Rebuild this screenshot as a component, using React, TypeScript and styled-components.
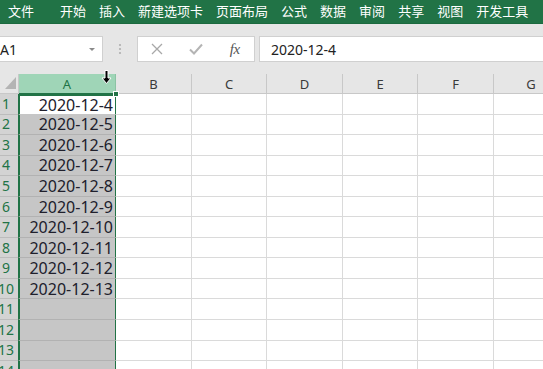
import React from "react";
import styled, { createGlobalStyle, css } from "styled-components";

const Global = createGlobalStyle`
  html, body { margin: 0; padding: 0; background: #ffffff; overflow: hidden; }
  * { box-sizing: border-box; }
`;

const GREEN = "#217346";

const Window = styled.div`
  width: 543px;
  height: 369px;
  overflow: hidden;
  position: relative;
  font-family: "Noto Sans", "Noto Sans CJK SC", sans-serif;
  background: #ffffff;
`;

const Ribbon = styled.div`
  height: 24px;
  background: ${GREEN};
  display: flex;
  align-items: flex-start;
  gap: 13px;
  padding: 1px 0 0 8px;
  border-bottom: 1px solid #1c6a3f;
`;

const Tab = styled.span<{ $wide?: boolean }>`
  font-family: "Noto Sans CJK SC", sans-serif;
  font-size: 13px;
  line-height: 19px;
  color: #ffffff;
  white-space: nowrap;
  margin-right: ${(p) => (p.$wide ? "13px" : "0")};
`;

const FormulaBar = styled.div`
  height: 50px;
  background: #e6e6e6;
  display: flex;
  align-items: flex-start;
  padding-top: 12px;
`;

const NameBox = styled.div`
  margin-left: -7px;
  width: 110px;
  height: 26px;
  background: #ffffff;
  border: 1px solid #d0d0d0;
  display: flex;
  align-items: center;
  justify-content: space-between;
  padding: 0 7px 0 6px;
  font-size: 14px;
  color: #222222;
`;

const Caret = styled.span`
  width: 0;
  height: 0;
  border-left: 3px solid transparent;
  border-right: 3px solid transparent;
  border-top: 3px solid #8a8a8a;
`;

const Grip = styled.div`
  width: 34px;
  height: 26px;
  display: flex;
  align-items: center;
  justify-content: center;
`;

const FxBox = styled.div`
  width: 118px;
  height: 26px;
  background: #ffffff;
  border: 1px solid #d0d0d0;
  display: flex;
  align-items: center;
`;

const FxButton = styled.span`
  flex: 1;
  display: flex;
  align-items: center;
  justify-content: center;
  color: #a8a8a8;
`;

const FxLabel = styled.span`
  font-family: "Liberation Serif", serif;
  font-style: italic;
  font-size: 15px;
  color: #555555;
  letter-spacing: -0.5px;
`;

const Input = styled.div`
  flex: 1;
  margin-left: 4px;
  height: 26px;
  background: #ffffff;
  border: 1px solid #d0d0d0;
  border-right: none;
  display: flex;
  align-items: center;
  padding-left: 11px;
  font-size: 14px;
  color: #222222;
`;

const Sheet = styled.div`
  margin-left: -7px;
  display: grid;
  grid-template-columns: 26px 97px 76px 75px 76px 75px 76px 75px;
  grid-template-rows: 20px;
  grid-auto-rows: 20.55px;
`;

const Corner = styled.div`
  background: #e6e6e6;
  border-right: 1px solid #c8c8c8;
  border-bottom: 1px solid #c8c8c8;
  display: flex;
  align-items: flex-end;
  justify-content: flex-end;
  padding: 0 2px 4px 0;
`;

const Triangle = styled.span`
  width: 11px;
  height: 12px;
  background: #b4b4b4;
  clip-path: polygon(100% 0, 100% 100%, 0 100%);
`;

const ColHead = styled.div<{ $active?: boolean }>`
  background: ${(p) => (p.$active ? "#9fd5b7" : "#e6e6e6")};
  color: ${(p) => (p.$active ? GREEN : "#3a3a3a")};
  border-right: 1px solid ${(p) => (p.$active ? "#8cc3a4" : "#c8c8c8")};
  border-bottom: 1px solid ${(p) => (p.$active ? GREEN : "#c8c8c8")};
  font-size: 13px;
  display: flex;
  align-items: center;
  justify-content: center;
  padding-top: 1px;
`;

const RowHead = styled.div`
  background: #d3d3d3;
  color: ${GREEN};
  border-bottom: 1px solid #bcbcbc;
  font-size: 14px;
  line-height: 1;
  display: flex;
  align-items: center;
  justify-content: center;
`;

const Cell = styled.div<{ $sel?: boolean; $active?: boolean; $first?: boolean }>`
  border-right: 1px solid #dadada;
  border-bottom: 1px solid #dadada;
  background: #ffffff;
  ${(p) =>
    p.$sel &&
    css`
      background: ${p.$active ? "#ffffff" : "#c6c6c6"};
      border-left: 2px solid ${GREEN};
      border-right: 2px solid ${GREEN};
      border-bottom: 1px solid ${p.$active ? "#c6c6c6" : "#b2b2b2"};
      ${p.$first && css`border-top: 2px solid ${GREEN};`}
      display: flex;
      align-items: center;
      justify-content: flex-end;
      padding-right: 2px;
      font-size: 16px;
      line-height: 1;
      color: #20202c;
      margin-left: -1px;
      margin-right: -1px;
    `}
`;

const FillHandle = styled.span`
  position: absolute;
  left: 113px;
  top: 91px;
  width: 6px;
  height: 6px;
  background: ${GREEN};
  border: 1px solid #ffffff;
`;

const Cursor = styled.svg`
  position: absolute;
  left: 101px;
  top: 70px;
`;

const tabs = ["文件", "开始", "插入", "新建选项卡", "页面布局", "公式", "数据", "审阅", "共享", "视图", "开发工具"];
const cols = ["A", "B", "C", "D", "E", "F", "G"];
const dates = [
  "2020-12-4",
  "2020-12-5",
  "2020-12-6",
  "2020-12-7",
  "2020-12-8",
  "2020-12-9",
  "2020-12-10",
  "2020-12-11",
  "2020-12-12",
  "2020-12-13",
];

export default function App() {
  const rows = Array.from({ length: 14 }, (_, i) => i + 1);
  return (
    <Window>
      <Global />
      <Ribbon>
        {tabs.map((t, i) => (
          <Tab key={t} $wide={i === 0}>
            {t}
          </Tab>
        ))}
      </Ribbon>
      <FormulaBar>
        <NameBox>
          <span>A1</span>
          <Caret />
        </NameBox>
        <Grip>
          <svg width="4" height="12" viewBox="0 0 4 12">
            <circle cx="2" cy="2" r="1.1" fill="#b0b0b0" />
            <circle cx="2" cy="6" r="1.1" fill="#b0b0b0" />
            <circle cx="2" cy="10" r="1.1" fill="#b0b0b0" />
          </svg>
        </Grip>
        <FxBox>
          <FxButton>
            <svg width="12" height="12" viewBox="0 0 12 12">
              <path d="M1 1 L11 11 M11 1 L1 11" stroke="#a8a8a8" strokeWidth="1.3" />
            </svg>
          </FxButton>
          <FxButton>
            <svg width="14" height="12" viewBox="0 0 14 12">
              <path d="M1 6.5 L5 10.5 L13 1.5" stroke="#b4b4b4" strokeWidth="2" fill="none" />
            </svg>
          </FxButton>
          <FxButton>
            <FxLabel>fx</FxLabel>
          </FxButton>
        </FxBox>
        <Input>2020-12-4</Input>
      </FormulaBar>
      <Sheet>
        <Corner>
          <Triangle />
        </Corner>
        {cols.map((c, i) => (
          <ColHead key={c} $active={i === 0}>
            {c}
          </ColHead>
        ))}
        {rows.map((r) => (
          <React.Fragment key={r}>
            <RowHead>{r}</RowHead>
            <Cell $sel $active={r === 1} $first={r === 1}>
              {dates[r - 1] ?? ""}
            </Cell>
            {cols.slice(1).map((c) => (
              <Cell key={c} />
            ))}
          </React.Fragment>
        ))}
      </Sheet>
      <FillHandle />
      <Cursor width="11" height="15" viewBox="0 0 11 15">
        <path d="M4 0.5 H7 V8 H10 L5.5 13.5 L1 8 H4 Z" fill="#000000" stroke="#ffffff" strokeWidth="1" />
      </Cursor>
    </Window>
  );
}
